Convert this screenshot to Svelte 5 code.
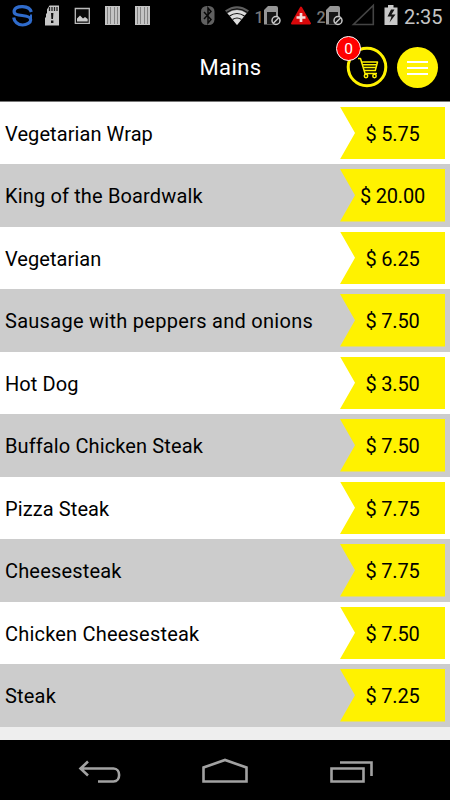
<script>
  // name, price, letter spacing in px
  const items = [
    ['Vegetarian Wrap', '5.75', 0.08],
    ['King of the Boardwalk', '20.00', 0.15],
    ['Vegetarian', '6.25', 0.05],
    ['Sausage with peppers and onions', '7.50', 0.28],
    ['Hot Dog', '3.50', 0.1],
    ['Buffalo Chicken Steak', '7.50', 0.12],
    ['Pizza Steak', '7.75', 0.1],
    ['Cheesesteak', '7.75', 0.17],
    ['Chicken Cheesesteak', '7.50', 0.2],
    ['Steak', '7.25', 0.2],
  ];
</script>

{#snippet stripes()}
  <svg width="30" height="32" viewBox="0 0 30 32">
    <path d="M8 6h15v19H8z" fill="#c4c4c4" />
    <path d="M10.500 7v17M13.500 7v17M17.500 7v17M20.500 7v17" stroke="#858585" stroke-width="1" />
  </svg>
{/snippet}

{#snippet sim(label)}
  <svg width="31" height="32" viewBox="0 0 31 32">
    <text x="0.500" y="22.500" font-size="16" font-weight="500" fill="#777" font-family="Roboto, sans-serif">{label}</text>
    <path d="M10 24.500V10l4-4h8q2 0 2 2v16.500z" fill="#969696" />
    <path d="M13 12h9v12h-9z" fill="#161616" />
    <circle cx="22" cy="20.500" r="4" fill="#111" stroke="#c8c8c8" stroke-width="1.500" />
    <path d="m19.300 23.200 5.400-5.400" stroke="#c8c8c8" stroke-width="1.500" />
  </svg>
{/snippet}

<div class="screen">
  <div class="status">
    <div class="group">
      <svg width="30" height="32" viewBox="0 0 30 32" fill="none" stroke="#2f6bcb">
        <path d="M24.300 12C22.500 5 9 5 7.200 10.500c-.8 4 3.500 4.700 8 5 5 .4 8.500 1.500 8.500 4.500 0 2.500-4 5-8 5-5 0-8.500-3.500-9-7.500" stroke-width="3.200" />
        <path d="M24 14.500v5" stroke-width="2" />
      </svg>
      <svg width="30" height="32" viewBox="0 0 30 32">
        <path d="M8 25.500V18l1-1v-3l1-1V9.500l2.500-4H22v20z" fill="#c6c6c6" />
        <path d="M12.500 7v4M15 7v4M17.500 7v4M20 7v4" stroke="#222" stroke-width="1.300" />
        <path d="M14 13h2.400l-.4 6h-1.600zM14 20.500h2.400V23H14z" fill="#111" />
      </svg>
      <svg width="30" height="32" viewBox="0 0 30 32">
        <path d="M8.300 8.500h14v14.800h-14z" fill="#080808" stroke="#bbb" stroke-width="1.300" />
        <path d="M10 21.500v-3l3-3 3 3 2-1.500 2.700 2v2.500z" fill="#ccc" />
      </svg>
      {@render stripes()}
      {@render stripes()}
    </div>
    <div class="group">
      <svg width="24" height="32" viewBox="0 0 24 32">
        <rect x="1" y="6" width="13.500" height="19" rx="5.500" fill="#606060" />
        <path d="m4 12 7 7.500L8 23V8l3 3.500L4 19" fill="none" stroke="#080808" stroke-width="1.500" />
      </svg>
      <svg width="30" height="32" viewBox="0 0 30 32">
        <path d="M1 10.500Q13 2 25 10.500L13 25z" fill="#5f5f5f" />
        <path d="M3.500 13.300q9.500-6.500 19 0L13 25z" fill="#ddd" />
        <path d="M2.500 12.400q10.500-7 21 0M5.500 16q7.500-5 15 0M8.500 19.500q4.500-3 9 0" fill="none" stroke="#111" stroke-width="1.200" />
      </svg>
      {@render sim('1')}
      <svg width="31" height="32" viewBox="0 0 31 32">
        <path d="m16 7.500 9 16H7z" fill="#d9080b" stroke="#d9080b" stroke-width="2" stroke-linejoin="round" />
        <path d="M16 13v9M11.500 17.500h9" stroke="#f3dada" stroke-width="2.700" />
      </svg>
      {@render sim('2')}
      <svg width="35" height="32" viewBox="0 0 35 32">
        <path d="M6.500 24.500h19.800v-19z" fill="none" stroke="#444" stroke-width="1.600" />
      </svg>
      <svg width="22" height="32" viewBox="0 0 22 32">
        <path d="M2.500 7.500h3.500V5h5.500v2.500h4V25h-13z" fill="#c9c9c9" />
        <path d="m9 9.500-3.500 7h4l-2 6 6-8h-4l3-5z" fill="#151515" />
      </svg>
      <span class="time">2:35</span>
    </div>
  </div>

  <header>
    <h1>Mains</h1>
    <div class="cart">
      <svg width="42" height="42" viewBox="0 0 42 42" fill="none" stroke="#fff200">
        <circle cx="21" cy="21" r="18.800" stroke-width="3" />
        <g stroke-width="1.500" stroke-linejoin="round">
          <path d="M12 12.500h2.500l4.500 15h12M16 16h15.500l-2.200 8.500H18.300" />
          <path d="M17 18.800h13.500M17.800 21.600h12" />
          <circle cx="20" cy="30" r="1.700" /><circle cx="28.500" cy="30" r="1.700" />
        </g>
      </svg>
      <span class="badge">0</span>
    </div>
    <div class="menu"><i></i><i></i><i></i></div>
  </header>

  <main>
    {#each items as [name, price, spacing]}
      <div class="row">
        <span class="name" style:letter-spacing="{spacing}px">{name}</span>
        <span class="price">$ {price}</span>
      </div>
    {/each}
  </main>

  <nav>
    <svg width="50" height="40" viewBox="75 750 50 40">
      <path d="M80.500 768.500h33c7.500 0 7.500 13 0 13H98M88 761.500l-7.500 7 7.500 7" />
    </svg>
    <svg width="50" height="40" viewBox="200 750 50 40">
      <path d="M203.500 781.500v-14l21.500-7.500 21.500 7.500v14z" />
    </svg>
    <svg width="50" height="40" viewBox="325 750 50 40">
      <path d="M331.500 768.500h32v13h-32zM340 762.500h31.500V776" />
    </svg>
  </nav>
</div>

<style>
  :global(body) { margin: 0; background: #000; }
  .screen {
    width: 450px;
    height: 800px;
    display: flex;
    flex-direction: column;
    overflow: hidden;
    background: #000;
    font-family: Roboto, "Liberation Sans", sans-serif;
  }
  svg { display: block; flex: none; }
  .status {
    height: 34px;
    display: flex;
    justify-content: space-between;
    padding: 0 7px;
  }
  .group { display: flex; height: 32px; }
  .time {
    width: 39px;
    color: #c4c4c4;
    font-size: 20px;
    line-height: 34px;
    white-space: nowrap;
  }
  header {
    height: 67px;
    box-sizing: border-box;
    display: flex;
    align-items: center;
    padding-right: 12px;
  }
  h1 {
    margin: 0 0 0 121px;
    flex: 1;
    text-align: center;
    font-size: 22px;
    font-weight: 400;
    letter-spacing: 0.400px;
    color: #fff;
    padding-right: 6px;
  }
  .cart { position: relative; margin-right: 9px; margin-top: -1px; }
  .badge {
    position: absolute;
    left: -10px;
    top: -10px;
    width: 23px;
    height: 23px;
    border: 1.500px solid #fff;
    border-radius: 50%;
    background: #f00;
    color: #fff;
    font-size: 15.500px;
    line-height: 25px;
    text-align: center;
  }
  .menu {
    width: 41px;
    height: 41px;
    margin-top: -1px;
    border-radius: 50%;
    background: #fff200;
    display: flex;
    flex-direction: column;
    align-items: center;
    justify-content: center;
    gap: 4px;
    padding-top: 1px;
    box-sizing: border-box;
  }
  .menu i { width: 21px; height: 2px; background: #fff; }
  main {
    height: 639px;
    box-sizing: border-box;
    border-top: 1px solid #777;
    background: #eee;
  }
  .row {
    height: 62.500px;
    display: flex;
    align-items: center;
    justify-content: space-between;
    padding: 0 5px;
    background: #fff;
    box-sizing: border-box;
    color: #000;
    font-size: 20px;
    white-space: pre;
  }
  .row:first-child { height: 62px; }
  .row:nth-child(even) { background: #ccc; }
  .name { padding-top: 2px; }
  .price {
    width: 105px;
    height: 52.500px;
    line-height: 54px;
    letter-spacing: -0.200px;
    text-align: center;
    background: #fff200;
    clip-path: polygon(0 0, 100% 0, 100% 100%, 0 100%, 15px 50%);
  }
  nav {
    height: 60px;
    display: flex;
    gap: 75px;
    padding: 10px 75px;
    box-sizing: border-box;
  }
  nav path { fill: none; stroke: #a2a2a2; stroke-width: 2.600; }
</style>
